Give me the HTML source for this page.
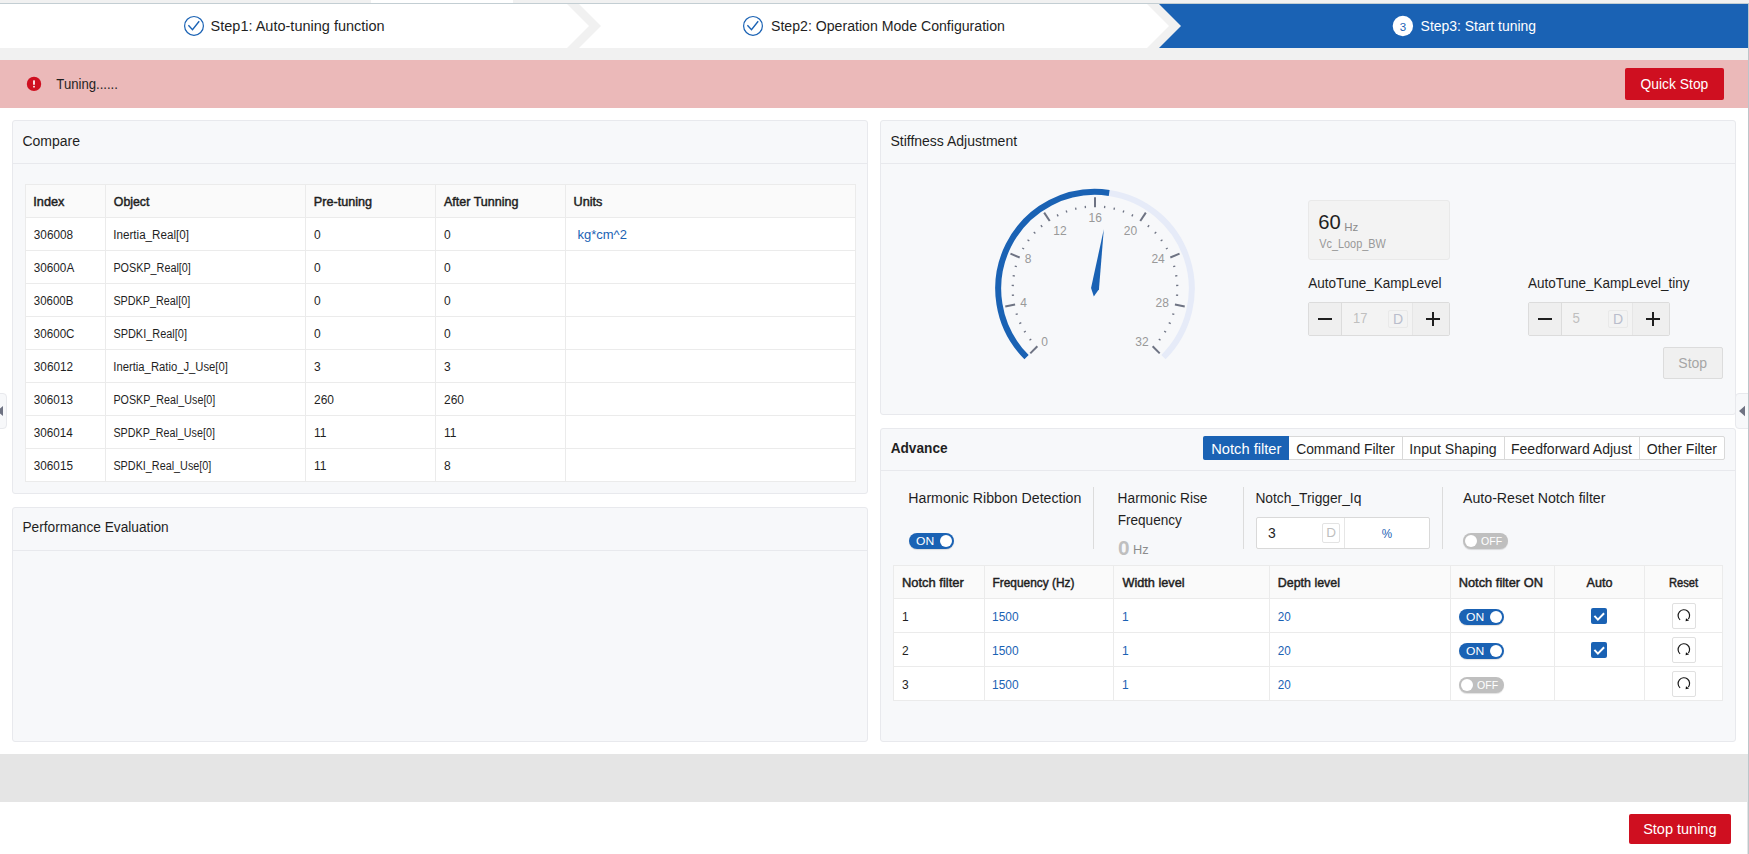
<!DOCTYPE html>
<html lang="en">
<head>
<meta charset="utf-8">
<title>Auto tuning</title>
<style>
*{box-sizing:border-box;margin:0;padding:0}
html,body{width:1749px;height:854px;overflow:hidden;background:#fff}
body{position:relative;font-family:"Liberation Sans",sans-serif;font-size:14px;color:#1f1f1f}
.abs{position:absolute}
.t{position:absolute;white-space:nowrap;line-height:1}
/* top */
#tb1 td,#tb1 th,#tb2 td,#tb2 th{padding-top:2px}
#topstrip{left:0;top:0;width:1749px;height:4px;background:#f1f1f1;border-bottom:1px solid #c3ced3}
#topwhite{left:371px;top:0;width:142px;height:3px;background:#fff}
#stepbg{left:0;top:4px;width:1749px;height:56px;background:#f1f1f1}
#steps{left:0;top:4px}
#alert{left:0;top:60px;width:1748px;height:48px;background:#ebb9b9}
.rbtn{background:#cf0f20;color:#fff;border-radius:2px;text-align:center}
#edge{left:1748px;top:3px;width:1px;height:851px;background:#bcc6ca}
#edge2{left:1747px;top:754px;width:1px;height:100px;background:#e3e5e6}
#grayband{left:0;top:754px;width:1747px;height:48px;background:#e5e5e5}
/* cards */
.card{position:absolute;background:#f7f8fa;border:1px solid #e8e9ed;border-radius:3px}
.chead{position:absolute;left:0;top:0;right:0;height:43px;border-bottom:1px solid #e8e9ed}
/* tables */
table{border-collapse:collapse;position:absolute;table-layout:fixed;font-size:12px;background:#fff}
td,th{border:1px solid #ebebeb;height:33px;padding:0 0 0 8px;text-align:left;white-space:nowrap;font-weight:normal;color:#1f1f1f}
th{background:#fafafa;font-weight:normal;-webkit-text-stroke:0.45px #1f1f1f}
.lnk{color:#1a62b4}
td span,th span{display:inline-block;transform-origin:0 50%}
.t{transform-origin:0 50%}
/* switches */
.sw{position:absolute;height:16px;border-radius:8px;font-size:11px;line-height:16px;color:#fff;box-shadow:0 1px 1px rgba(0,0,0,.12)}
.sw.on{background:#1a62b4}
.sw.off{background:#bfbfbf}
.sw i{position:absolute;top:1.7px;width:12.6px;height:12.6px;border-radius:50%;background:#fff}
.sw b{position:absolute;top:0;font-weight:normal;transform-origin:0 50%}
.cb{position:absolute;width:16px;height:16px;background:#1a62b4;border-radius:2px}
.rst{position:absolute;width:24px;height:25.5px;background:#fff;border:1px solid #e0e0e0;border-radius:2px}
.handle{position:absolute;background:#f7f8fa;border:1px solid #e8e9ed}

.spin{position:absolute;width:142px;height:34px;background:#f3f3f3;border:1px solid #dcdcdc;border-radius:2px}
.spin u{position:absolute;top:0;height:32px;background:#efefef;text-decoration:none}
.spin u.mn{left:0;width:33px;border-right:1px solid #dcdcdc}
.spin u.pl{right:0;width:37px;border-left:1px solid #e6e6e6}
.spin i{position:absolute;left:8.9px;top:14.6px;width:14.1px;height:2.6px;background:#1f1f1f}
.spin b{position:absolute;left:116.7px;top:14.5px;width:14.5px;height:2.6px;background:#1f1f1f}
.spin s{position:absolute;left:122.7px;top:8.6px;width:2.6px;height:14.4px;background:#1f1f1f}
.spin em{position:absolute;left:79px;top:7px;width:20px;height:18px;border:1px solid #e9e9e9;border-radius:2px;font-style:normal;font-size:14px;line-height:17px;text-align:center;color:#b9bdcc}

.tdv{top:437px;width:1px;height:22px;background:#d9d9d9}
.tab{top:441.5px;font-size:14px}
.vdv{top:487px;width:1px;height:62px;background:#dcdcdc}
th.c{text-align:center;padding:0}
tr.r34 td{height:34px}
#s1{transform:translateX(-0.44px) scaleX(1.0355)}
#s2{transform:translateX(-0.01px) scaleX(1.0087)}
#s3{transform:translateX(-0.39px) scaleX(0.9949)}
#tun{transform:translateX(0.36px) scaleX(0.9379)}
#qst{transform:translateX(-0.42px) scaleX(0.9886)}
#h1{transform:translateX(-0.58px) scaleX(0.9996)}
#h2{transform:translateX(-0.58px) scaleX(0.9790)}
#h3{transform:translateX(-0.60px) scaleX(1.0006)}
#h4{transform:translateX(-0.35px) scaleX(0.9758)}
#a00{transform:translateX(-0.70px) scaleX(1.0586)}
#a01{transform:translateX(-0.19px) scaleX(1.0250)}
#a02{transform:translateX(-0.19px) scaleX(1.0507)}
#a03{transform:translateX(0.00px) scaleX(1.0423)}
#a04{transform:translateX(-0.50px) scaleX(1.0555)}
#a10{transform:translateX(-0.20px) scaleX(0.9820)}
#a20{transform:translateX(-0.20px) scaleX(0.9765)}
#a30{transform:translateX(-0.19px) scaleX(0.9551)}
#a40{transform:translateX(-0.20px) scaleX(0.9682)}
#a50{transform:translateX(-0.20px) scaleX(0.9823)}
#a60{transform:translateX(-0.20px) scaleX(0.9769)}
#a70{transform:translateX(-0.20px) scaleX(0.9759)}
#a80{transform:translateX(-0.20px) scaleX(0.9769)}
#a11{transform:translateX(-0.71px) scaleX(0.9692)}
#a21{transform:translateX(-0.60px) scaleX(0.8994)}
#a31{transform:translateX(-0.60px) scaleX(0.9000)}
#a41{transform:translateX(-0.61px) scaleX(0.9112)}
#a51{transform:translateX(-0.67px) scaleX(0.9381)}
#a61{transform:translateX(-0.59px) scaleX(0.8933)}
#a71{transform:translateX(-0.59px) scaleX(0.8947)}
#a81{transform:translateX(-0.60px) scaleX(0.9009)}
#a14{transform:translateX(-0.58px) scaleX(1.0844)}
#v60{transform:translateX(-0.71px) scaleX(1.0102)}
#vcl{transform:translateX(0.25px) scaleX(0.9071)}
#l1{transform:translateX(0.21px) scaleX(0.9653)}
#l2{transform:translateX(-0.09px) scaleX(0.9643)}
#n17{transform:translateX(-0.92px) scaleX(0.9214)}
#n5{transform:translateX(0.58px) scaleX(0.9481)}
#stopt{transform:translateX(-0.70px) scaleX(1.0005)}
#tb_a{transform:translateX(-0.75px) scaleX(1.0485)}
#tb_b{transform:translateX(0.13px) scaleX(0.9908)}
#tb_c{transform:translateX(-0.65px) scaleX(1.0109)}
#tb_d{transform:translateX(-1.00px) scaleX(1.0015)}
#tb_e{transform:translateX(-0.13px) scaleX(1.0012)}
#p1{transform:translateX(-0.71px) scaleX(1.0110)}
#p2{transform:translateX(-0.38px) scaleX(0.9789)}
#p2b{transform:translateX(-0.37px) scaleX(0.9708)}
#p2v{transform:translateX(-0.01px) scaleX(1.0413)}
#p2u{transform:translateX(-1.06px) scaleX(1.0622)}
#p3{transform:translateX(-0.58px) scaleX(0.9842)}
#p3v{transform:translateX(0.04px) scaleX(0.9948)}
#p3u{transform:translateX(0.74px) scaleX(0.9329)}
#p4{transform:translateX(0.01px) scaleX(1.0110)}
#b00{transform:translateX(-0.00px) scaleX(1.0765)}
#b01{transform:translateX(-0.55px) scaleX(0.9922)}
#b02{transform:translateX(0.40px) scaleX(1.0586)}
#b03{transform:translateX(-0.18px) scaleX(1.0342)}
#b04{transform:translateX(-0.30px) scaleX(1.0705)}
#b05{transform:translateX(-0.42px) scaleX(1.0498)}
#b06{transform:translateX(1.05px) scaleX(0.9275)}
#stt{transform:translateX(-0.85px) scaleX(1.0350)}
#b11{transform:translateX(-0.99px) scaleX(0.9933)}
#b13{transform:translateX(-0.14px) scaleX(0.9725)}
#b21{transform:translateX(-0.99px) scaleX(0.9933)}
#b23{transform:translateX(-0.14px) scaleX(0.9725)}
#b31{transform:translateX(-0.99px) scaleX(0.9933)}
#b33{transform:translateX(-0.14px) scaleX(0.9725)}
</style>
</head>
<body>
<!-- top strip + steps -->
<div class="abs" id="topstrip"></div>
<div class="abs" id="topwhite"></div>
<div class="abs" id="stepbg"></div>
<svg class="abs" id="steps" width="1749" height="44" viewBox="0 0 1749 44">
  <polygon points="0,0 567,0 589,22 567,44 0,44" fill="#fff"/>
  <polygon points="579,0 1147,0 1169,22 1147,44 579,44 601,22" fill="#fff"/>
  <polygon points="1159,0 1748,0 1748,44 1159,44 1181,22" fill="#1a62b4"/>
  <circle cx="194" cy="21.9" r="9.4" fill="none" stroke="#1a62b4" stroke-width="1.2"/>
  <path d="M188.4 21.3 L192.5 25.7 L199.2 17.3" fill="none" stroke="#1a62b4" stroke-width="1.4"/>
  <circle cx="753" cy="21.9" r="9.4" fill="none" stroke="#1a62b4" stroke-width="1.2"/>
  <path d="M747.4 21.3 L751.5 25.7 L758.2 17.3" fill="none" stroke="#1a62b4" stroke-width="1.4"/>
  <circle cx="1402.9" cy="22" r="10.2" fill="#fff"/>
</svg>
<div class="t" id="s1" style="left:211px;top:19px;font-size:14px">Step1: Auto-tuning function</div>
<div class="t" id="s2" style="left:771px;top:19px;font-size:14px">Step2: Operation Mode Configuration</div>
<div class="t" id="s3n" style="left:1399.8px;top:21.5px;font-size:11.5px;color:#1a62b4">3</div>
<div class="t" id="s3" style="left:1421px;top:19px;font-size:14px;color:#fff">Step3: Start tuning</div>

<!-- alert -->
<div class="abs" id="alert"></div>
<svg class="abs" style="left:26px;top:76px" width="16" height="16" viewBox="0 0 16 16"><circle cx="8" cy="7.9" r="7.2" fill="#cf0f20"/><rect x="7.15" y="4.3" width="1.7" height="4.5" rx=".4" fill="#fff"/><circle cx="8" cy="10.7" r=".9" fill="#fff"/></svg>
<div class="t" id="tun" style="left:56px;top:77px;font-size:14px">Tuning......</div>
<div class="abs rbtn" id="qs" style="left:1625px;top:68px;width:99px;height:32px"></div>
<div class="t" id="qst" style="left:1641px;top:77px;font-size:14px;color:#fff">Quick Stop</div>

<!-- Compare card -->
<div class="card" id="c1" style="left:12px;top:120px;width:856px;height:374px">
  <div class="chead"></div>
</div>
<div class="t" id="h1" style="left:23px;top:134px;font-size:14px">Compare</div>
<table id="tb1" style="left:25px;top:184px;width:830px">
<colgroup><col style="width:80px"><col style="width:200px"><col style="width:130px"><col style="width:130px"><col style="width:290px"></colgroup>
<tr><th><span id="a00">Index</span></th><th><span id="a01">Object</span></th><th><span id="a02">Pre-tuning</span></th><th><span id="a03">After Tunning</span></th><th><span id="a04">Units</span></th></tr>
<tr><td><span id="a10">306008</span></td><td><span id="a11">Inertia_Real[0]</span></td><td><span id="a12">0</span></td><td><span id="a13">0</span></td><td class="lnk" style="padding-left:12px"><span id="a14">kg*cm^2</span></td></tr>
<tr><td><span id="a20">30600A</span></td><td><span id="a21">POSKP_Real[0]</span></td><td><span id="a22">0</span></td><td><span id="a23">0</span></td><td></td></tr>
<tr><td><span id="a30">30600B</span></td><td><span id="a31">SPDKP_Real[0]</span></td><td><span id="a32">0</span></td><td><span id="a33">0</span></td><td></td></tr>
<tr><td><span id="a40">30600C</span></td><td><span id="a41">SPDKI_Real[0]</span></td><td><span id="a42">0</span></td><td><span id="a43">0</span></td><td></td></tr>
<tr><td><span id="a50">306012</span></td><td><span id="a51">Inertia_Ratio_J_Use[0]</span></td><td><span id="a52">3</span></td><td><span id="a53">3</span></td><td></td></tr>
<tr><td><span id="a60">306013</span></td><td><span id="a61">POSKP_Real_Use[0]</span></td><td><span id="a62">260</span></td><td><span id="a63">260</span></td><td></td></tr>
<tr><td><span id="a70">306014</span></td><td><span id="a71">SPDKP_Real_Use[0]</span></td><td><span id="a72">11</span></td><td><span id="a73">11</span></td><td></td></tr>
<tr><td><span id="a80">306015</span></td><td><span id="a81">SPDKI_Real_Use[0]</span></td><td><span id="a82">11</span></td><td><span id="a83">8</span></td><td></td></tr>
</table>

<!-- Performance card -->
<div class="card" id="c2" style="left:12px;top:507px;width:856px;height:235px">
  <div class="chead"></div>
</div>
<div class="t" id="h2" style="left:23px;top:520px;font-size:14px">Performance Evaluation</div>

<!-- Stiffness card -->
<div class="card" id="c3" style="left:880px;top:120px;width:856px;height:295px">
  <div class="chead"></div>
</div>
<div class="t" id="h3" style="left:891px;top:134px;font-size:14px">Stiffness Adjustment</div>
<svg class="abs" id="gauge" style="left:960px;top:170px;font-family:'Liberation Sans',sans-serif;font-size:12px;fill:#999" width="280" height="210" viewBox="0 0 280 210">
<path d="M149.20 22.95 A96.8 96.8 0 0 1 203.45 187.15" fill="none" stroke="#e6ebf8" stroke-width="6.0"/>
<path d="M66.55 187.15 A96.8 96.8 0 0 1 149.20 22.95" fill="none" stroke="#1a62b4" stroke-width="6.0"/>
<line x1="70.30" y1="183.40" x2="77.37" y2="176.33" stroke="#6e7383" stroke-width="2"/>
<line x1="45.26" y1="136.55" x2="55.07" y2="134.60" stroke="#6e7383" stroke-width="2"/>
<line x1="50.47" y1="83.68" x2="59.70" y2="87.51" stroke="#6e7383" stroke-width="2"/>
<line x1="84.17" y1="42.62" x2="89.72" y2="50.94" stroke="#6e7383" stroke-width="2"/>
<line x1="135.00" y1="27.20" x2="135.00" y2="37.20" stroke="#6e7383" stroke-width="2"/>
<line x1="185.83" y1="42.62" x2="180.28" y2="50.94" stroke="#6e7383" stroke-width="2"/>
<line x1="219.53" y1="83.68" x2="210.30" y2="87.51" stroke="#6e7383" stroke-width="2"/>
<line x1="224.74" y1="136.55" x2="214.93" y2="134.60" stroke="#6e7383" stroke-width="2"/>
<line x1="199.70" y1="183.40" x2="192.63" y2="176.33" stroke="#6e7383" stroke-width="2"/>
<line x1="69.50" y1="170.33" x2="71.23" y2="168.97" stroke="#6e7383" stroke-width="1.3"/>
<line x1="63.89" y1="162.28" x2="65.77" y2="161.13" stroke="#6e7383" stroke-width="1.3"/>
<line x1="59.26" y1="153.62" x2="61.26" y2="152.70" stroke="#6e7383" stroke-width="1.3"/>
<line x1="55.68" y1="144.47" x2="57.77" y2="143.79" stroke="#6e7383" stroke-width="1.3"/>
<line x1="51.86" y1="125.24" x2="54.05" y2="125.07" stroke="#6e7383" stroke-width="1.3"/>
<line x1="51.66" y1="115.43" x2="53.86" y2="115.51" stroke="#6e7383" stroke-width="1.3"/>
<line x1="52.63" y1="105.65" x2="54.80" y2="106.00" stroke="#6e7383" stroke-width="1.3"/>
<line x1="54.73" y1="96.06" x2="56.85" y2="96.66" stroke="#6e7383" stroke-width="1.3"/>
<line x1="62.23" y1="77.95" x2="64.15" y2="79.02" stroke="#6e7383" stroke-width="1.3"/>
<line x1="67.53" y1="69.68" x2="69.31" y2="70.97" stroke="#6e7383" stroke-width="1.3"/>
<line x1="73.76" y1="62.09" x2="75.37" y2="63.58" stroke="#6e7383" stroke-width="1.3"/>
<line x1="80.84" y1="55.28" x2="82.26" y2="56.96" stroke="#6e7383" stroke-width="1.3"/>
<line x1="97.14" y1="44.39" x2="98.14" y2="46.35" stroke="#6e7383" stroke-width="1.3"/>
<line x1="106.13" y1="40.45" x2="106.90" y2="42.52" stroke="#6e7383" stroke-width="1.3"/>
<line x1="115.53" y1="37.60" x2="116.04" y2="39.74" stroke="#6e7383" stroke-width="1.3"/>
<line x1="125.20" y1="35.88" x2="125.46" y2="38.06" stroke="#6e7383" stroke-width="1.3"/>
<line x1="144.80" y1="35.88" x2="144.54" y2="38.06" stroke="#6e7383" stroke-width="1.3"/>
<line x1="154.47" y1="37.60" x2="153.96" y2="39.74" stroke="#6e7383" stroke-width="1.3"/>
<line x1="163.87" y1="40.45" x2="163.10" y2="42.52" stroke="#6e7383" stroke-width="1.3"/>
<line x1="172.86" y1="44.39" x2="171.86" y2="46.35" stroke="#6e7383" stroke-width="1.3"/>
<line x1="189.16" y1="55.28" x2="187.74" y2="56.96" stroke="#6e7383" stroke-width="1.3"/>
<line x1="196.24" y1="62.09" x2="194.63" y2="63.58" stroke="#6e7383" stroke-width="1.3"/>
<line x1="202.47" y1="69.68" x2="200.69" y2="70.97" stroke="#6e7383" stroke-width="1.3"/>
<line x1="207.77" y1="77.95" x2="205.85" y2="79.02" stroke="#6e7383" stroke-width="1.3"/>
<line x1="215.27" y1="96.06" x2="213.15" y2="96.66" stroke="#6e7383" stroke-width="1.3"/>
<line x1="217.37" y1="105.65" x2="215.20" y2="106.00" stroke="#6e7383" stroke-width="1.3"/>
<line x1="218.34" y1="115.43" x2="216.14" y2="115.51" stroke="#6e7383" stroke-width="1.3"/>
<line x1="218.14" y1="125.24" x2="215.95" y2="125.07" stroke="#6e7383" stroke-width="1.3"/>
<line x1="214.32" y1="144.47" x2="212.23" y2="143.79" stroke="#6e7383" stroke-width="1.3"/>
<line x1="210.74" y1="153.62" x2="208.74" y2="152.70" stroke="#6e7383" stroke-width="1.3"/>
<line x1="206.11" y1="162.28" x2="204.23" y2="161.13" stroke="#6e7383" stroke-width="1.3"/>
<line x1="200.50" y1="170.33" x2="198.77" y2="168.97" stroke="#6e7383" stroke-width="1.3"/>
<text x="84.6" y="175.6" text-anchor="middle">0</text>
<text x="63.7" y="137.0" text-anchor="middle">4</text>
<text x="68.1" y="92.8" text-anchor="middle">8</text>
<text x="100.0" y="65.0" text-anchor="middle">12</text>
<text x="135.2" y="51.7" text-anchor="middle">16</text>
<text x="170.4" y="65.0" text-anchor="middle">20</text>
<text x="198.1" y="92.8" text-anchor="middle">24</text>
<text x="202.3" y="137.0" text-anchor="middle">28</text>
<text x="181.9" y="175.6" text-anchor="middle">32</text>
<path d="M133.83 126.61 L138.96 119.29 L143.80 59.35 L131.04 118.11 Z" fill="#1a62b4"/>
</svg>


<!-- stiffness content -->
<div class="abs" style="left:1308px;top:200px;width:142px;height:60px;background:#f3f3f3;border:1px solid #e9e9e9;border-radius:3px"></div>
<div class="t" id="v60" style="left:1319px;top:212px;font-size:20px;color:#1f1f1f">60</div>
<div class="t" id="vhz" style="left:1344.3px;top:222px;font-size:11.5px;color:#8c8c8c">Hz</div>
<div class="t" id="vcl" style="left:1319px;top:238px;font-size:12px;color:#999">Vc_Loop_BW</div>
<div class="t" id="l1" style="left:1308px;top:276px;font-size:14px">AutoTune_KampLevel</div>
<div class="t" id="l2" style="left:1528px;top:276px;font-size:14px">AutoTune_KampLevel_tiny</div>
<div class="spin" style="left:1308px;top:302px"><u class="mn"></u><u class="pl"></u><i></i><b></b><s></s><em>D</em></div>
<div class="t" id="n17" style="left:1354px;top:311px;font-size:14px;color:#bfbfbf">17</div>
<div class="spin" style="left:1528px;top:302px"><u class="mn"></u><u class="pl"></u><i></i><b></b><s></s><em>D</em></div>
<div class="t" id="n5" style="left:1572px;top:311px;font-size:14px;color:#bfbfbf">5</div>
<div class="abs" id="stopb" style="left:1663px;top:347px;width:60px;height:32px;background:#f0f0f0;border:1px solid #dcdcdc;border-radius:2px;"></div>
<div class="t" id="stopt" style="left:1679px;top:356px;font-size:14px;color:#a6a6a6">Stop</div>

<!-- Advance card -->
<div class="card" id="c4" style="left:880px;top:428px;width:856px;height:314px">
  <div class="chead" style="height:42px"></div>
</div>
<div class="t" id="h4" style="left:891px;top:441px;font-size:14px;font-weight:bold">Advance</div>


<!-- advance tabs -->
<div class="abs" id="tabs" style="left:1203px;top:436px;width:522px;height:24px;background:#fff;border:1px solid #d9d9d9;border-radius:2px"></div>
<div class="abs" style="left:1203px;top:436px;width:86px;height:24px;background:#1a62b4;border-radius:2px 0 0 2px"></div>
<div class="abs tdv" style="left:1402px"></div><div class="abs tdv" style="left:1504px"></div><div class="abs tdv" style="left:1639px"></div>
<div class="t tab" id="tb_a" style="left:1212px;color:#fff">Notch filter</div>
<div class="t tab" id="tb_b" style="left:1296px">Command Filter</div>
<div class="t tab" id="tb_c" style="left:1410px">Input Shaping</div>
<div class="t tab" id="tb_d" style="left:1512px">Feedforward Adjust</div>
<div class="t tab" id="tb_e" style="left:1647px">Other Filter</div>

<!-- advance params -->
<div class="t" id="p1" style="left:909px;top:491px;font-size:14px">Harmonic Ribbon Detection</div>
<div class="sw on" style="left:909px;top:533px;width:45px"><b id="swon0" style="left:7.3px;top:0;transform:scaleX(1.1)">ON</b><i style="left:30.9px"></i></div>
<div class="abs vdv" style="left:1093px"></div>
<div class="t" id="p2" style="left:1118px;top:491px;font-size:14px">Harmonic Rise</div>
<div class="t" id="p2b" style="left:1118px;top:513px;font-size:14px">Frequency</div>
<div class="t" id="p2v" style="left:1118px;top:538px;font-size:20px;font-weight:bold;color:#bfbfbf">0</div>
<div class="t" id="p2u" style="left:1134px;top:544px;font-size:12px;color:#8c8c8c">Hz</div>
<div class="abs vdv" style="left:1243px"></div>
<div class="t" id="p3" style="left:1256px;top:491px;font-size:14px">Notch_Trigger_Iq</div>
<div class="abs" id="inp" style="left:1256px;top:517px;width:174px;height:32px;background:#fff;border:1px solid #d9d9d9;border-radius:2px"></div>
<div class="abs" style="left:1344px;top:518px;width:1px;height:30px;background:#e6e6e6"></div>
<div class="t" id="p3v" style="left:1268px;top:526px;font-size:14px">3</div>
<div class="abs" id="dbadge" style="left:1322px;top:523.2px;width:18px;height:19.4px;border:1px solid #e3e3e3;border-radius:2px;font-size:13.5px;line-height:17px;text-align:center;color:#bfbfbf">D</div>
<div class="t" id="p3u" style="left:1381px;top:527.8px;font-size:12.5px;color:#1a62b4">%</div>
<div class="abs vdv" style="left:1442px"></div>
<div class="t" id="p4" style="left:1463px;top:491px;font-size:14px">Auto-Reset Notch filter</div>
<div class="sw off" style="left:1463px;top:533px;width:45px"><i style="left:1.5px"></i><b id="swoff0" style="left:17.8px;top:.4px;transform:scaleX(.96)">OFF</b></div>

<!-- notch table -->
<table id="tb2" style="left:893px;top:565px;width:829px">
<colgroup><col style="width:91px"><col style="width:129px"><col style="width:156px"><col style="width:181px"><col style="width:104px"><col style="width:90px"><col style="width:78px"></colgroup>
<tr><th><span id="b00">Notch filter</span></th><th><span id="b01">Frequency (Hz)</span></th><th><span id="b02">Width level</span></th><th><span id="b03">Depth level</span></th><th><span id="b04">Notch filter ON</span></th><th class=c><span id="b05">Auto</span></th><th class=c><span id="b06">Reset</span></th></tr>
<tr class="r34"><td><span id="b10">1</span></td><td class="lnk"><span id="b11">1500</span></td><td class="lnk"><span id="b12">1</span></td><td class="lnk"><span id="b13">20</span></td><td></td><td></td><td></td></tr>
<tr class="r34"><td><span id="b20">2</span></td><td class="lnk"><span id="b21">1500</span></td><td class="lnk"><span id="b22">1</span></td><td class="lnk"><span id="b23">20</span></td><td></td><td></td><td></td></tr>
<tr class="r34"><td><span id="b30">3</span></td><td class="lnk"><span id="b31">1500</span></td><td class="lnk"><span id="b32">1</span></td><td class="lnk"><span id="b33">20</span></td><td></td><td></td><td></td></tr>
</table>
<div class="sw on" style="left:1459px;top:609px;width:45px"><b id="swon1" style="left:7.3px;top:0;transform:scaleX(1.1)">ON</b><i style="left:30.9px"></i></div>
<div class="sw on" style="left:1459px;top:643px;width:45px"><b id="swon2" style="left:7.3px;top:0;transform:scaleX(1.1)">ON</b><i style="left:30.9px"></i></div>
<div class="sw off" style="left:1459px;top:677px;width:45px"><i style="left:1.5px"></i><b id="swoff3" style="left:17.9px;top:.4px;transform:scaleX(.96)">OFF</b></div>
<div class="cb" style="left:1591px;top:608px"><svg width="16" height="16" viewBox="0 0 16 16"><path d="M3.4 7.9 L6.9 11.6 L13.1 5.3" fill="none" stroke="#fff" stroke-width="2"/></svg></div>
<div class="cb" style="left:1591px;top:642px"><svg width="16" height="16" viewBox="0 0 16 16"><path d="M3.4 7.9 L6.9 11.6 L13.1 5.3" fill="none" stroke="#fff" stroke-width="2"/></svg></div>
<div class="rst" style="left:1672.3px;top:603.2px"><svg width="22" height="23.5" viewBox="0 0 22 23.5"><path d="M7.08 15.84 A5.75 5.75 0 1 1 15.38 15.04" fill="none" stroke="#1a1a1a" stroke-width="1.2"/><path d="M13.0 14.3 L16.1 16.6 L12.6 17.3 Z" fill="#111"/></svg></div>
<div class="rst" style="left:1672.3px;top:637.2px"><svg width="22" height="23.5" viewBox="0 0 22 23.5"><path d="M7.08 15.84 A5.75 5.75 0 1 1 15.38 15.04" fill="none" stroke="#1a1a1a" stroke-width="1.2"/><path d="M13.0 14.3 L16.1 16.6 L12.6 17.3 Z" fill="#111"/></svg></div>
<div class="rst" style="left:1672.3px;top:671.2px"><svg width="22" height="23.5" viewBox="0 0 22 23.5"><path d="M7.08 15.84 A5.75 5.75 0 1 1 15.38 15.04" fill="none" stroke="#1a1a1a" stroke-width="1.2"/><path d="M13.0 14.3 L16.1 16.6 L12.6 17.3 Z" fill="#111"/></svg></div>

<!-- side handles -->
<div class="handle" style="left:-1px;top:393px;width:8px;height:36px;border-radius:0 4px 4px 0"></div>
<svg class="abs" style="left:0;top:405px" width="4" height="12" viewBox="0 0 4 12"><polygon points="-3,6 3,1 3,11" fill="#6e7282"/></svg>
<div class="handle" style="left:1735.4px;top:393px;width:14px;height:36px;border-radius:4px 0 0 4px"></div>
<svg class="abs" style="left:1739px;top:405px" width="7" height="12" viewBox="0 0 7 12"><polygon points="0,6 6,0.8 6,11.2" fill="#6e7282"/></svg>

<!-- bottom -->
<div class="abs" id="grayband"></div>
<div class="abs rbtn" id="st" style="left:1629px;top:814px;width:102px;height:30px"></div>
<div class="t" id="stt" style="left:1644px;top:822px;font-size:14px;color:#fff">Stop tuning</div>
<div class="abs" id="edge"></div><div class="abs" id="edge2"></div>
</body>
</html>
